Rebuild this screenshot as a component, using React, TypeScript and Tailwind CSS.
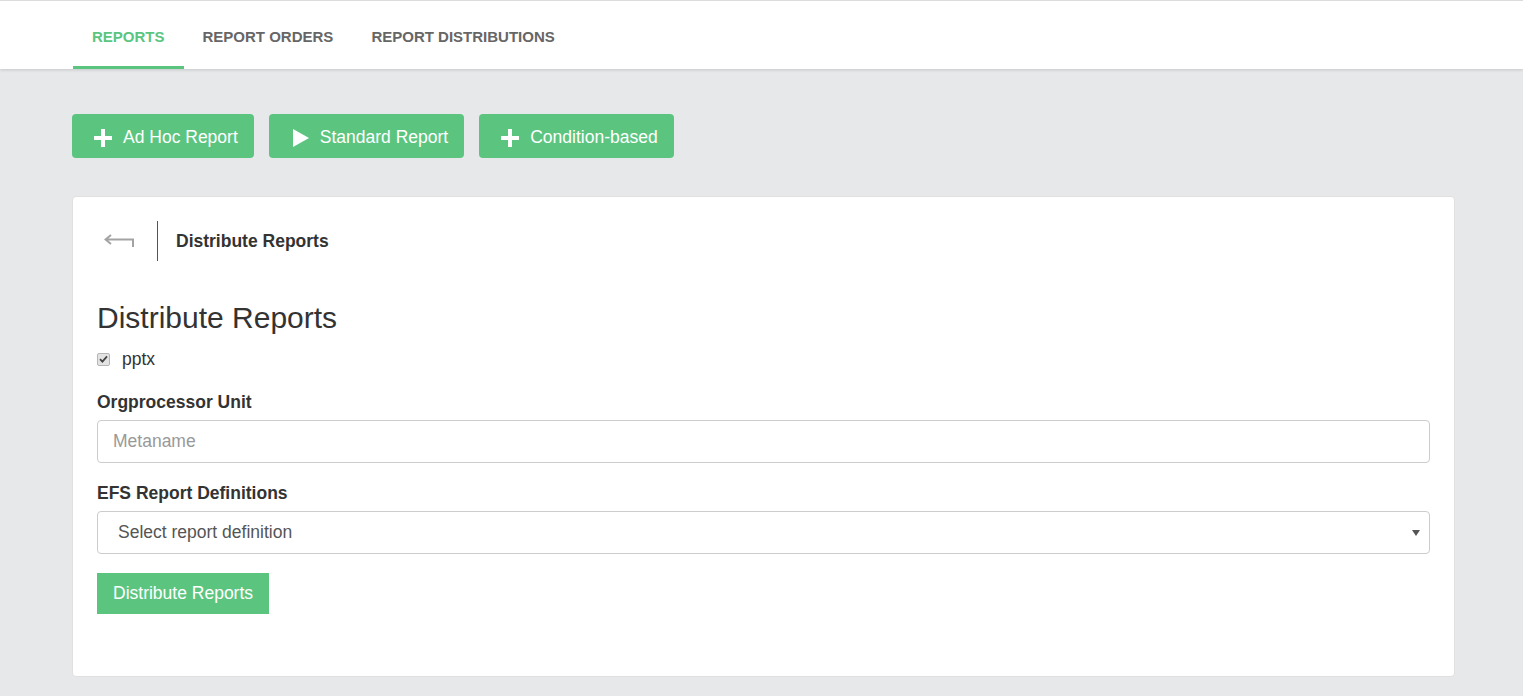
import React from 'react';

const PlusIcon: React.FC = () => (
  <svg width="18" height="18" viewBox="0 0 18 18" className="mr-[11px]">
    <path d="M7 0h4v7h7v4h-7v7H7v-7H0V7h7z" fill="white" />
  </svg>
);

const PlayIcon: React.FC = () => (
  <svg width="17" height="18" viewBox="0 0 17 18" className="mr-[11px]">
    <path d="M1 0L17 9L1 18z" fill="white" />
  </svg>
);

const BackArrow: React.FC = () => (
  <svg width="30" height="14" viewBox="0 0 30 14">
    <path d="M7 1L1.5 5.5L7 10M1.5 5.5H29V13" fill="none" stroke="#a3a3a3" strokeWidth="2" />
  </svg>
);

const tabs = ['REPORTS', 'REPORT ORDERS', 'REPORT DISTRIBUTIONS'];

export default function App() {
  return (
    <div
      className="min-h-screen bg-[#e7e8ea] text-[#333]"
      style={{ fontFamily: '"Liberation Sans", Arial, sans-serif' }}
    >
      {/* Top nav */}
      <div className="bg-white border-t border-[#dcdcdc] shadow-[0_1px_3px_rgba(0,0,0,0.15)]">
        <div className="flex pl-[73px] h-[68px]">
          {tabs.map((t, i) => (
            <div
              key={t}
              className={
                i === 0
                  ? 'flex items-center pt-[8px] px-[19px] text-[15px] font-bold text-[#5bc57f] border-b-[3px] border-[#5bc57f]'
                  : 'flex items-center pt-[8px] px-[19px] text-[15px] font-bold text-[#666] border-b-[3px] border-transparent'
              }
            >
              {t}
            </div>
          ))}
        </div>
      </div>

      <div className="pl-[72px] pr-[68px]">
        {/* Action buttons */}
        <div className="flex gap-[15px] mt-[45px]">
          <button className="flex items-center h-[44px] pl-[22px] pr-[16px] pt-[3px] rounded-[4px] bg-[#5bc57f] text-white text-[17.5px]">
            <PlusIcon />
            Ad Hoc Report
          </button>
          <button className="flex items-center h-[44px] pl-[23px] pr-[16px] pt-[3px] rounded-[4px] bg-[#5bc57f] text-white text-[17.5px]">
            <PlayIcon />
            Standard Report
          </button>
          <button className="flex items-center h-[44px] pl-[22px] pr-[16px] pt-[3px] rounded-[4px] bg-[#5bc57f] text-white text-[17.5px]">
            <PlusIcon />
            Condition-based
          </button>
        </div>

        {/* Card */}
        <div className="mt-[38px] bg-white rounded-[4px] border border-[#e0e0e0] px-6 pt-[24px] pb-[62px]">
          <div className="flex items-center h-[40px]">
            <div className="w-[60px] flex pl-[7px]">
              <BackArrow />
            </div>
            <div className="w-px h-[40px] bg-[#555]" />
            <div className="pl-[18px] text-[17.5px] font-bold text-[#333]">Distribute Reports</div>
          </div>

          <h2 className="mt-[39px] text-[30px] leading-[36px] text-[#333]">Distribute Reports</h2>

          <label className="flex items-center mt-[11px] h-[24px]">
            <span className="w-[13px] h-[13px] rounded-[2px] border border-[#b5b5b5] bg-[#e3e3e3] flex items-center justify-center">
              <svg width="9" height="8" viewBox="0 0 9 8">
                <path d="M1 4.2L3.4 6.6L8 1.4" fill="none" stroke="#444" strokeWidth="1.8" />
              </svg>
            </span>
            <span className="ml-[12px] text-[17.5px] text-[#333]">pptx</span>
          </label>

          <div className="mt-[19px] text-[17.5px] font-bold leading-[24px]">Orgprocessor Unit</div>
          <input
            placeholder="Metaname"
            className="mt-[6px] block w-full h-[43px] px-[15px] rounded-[4px] border border-[#ccc] text-[17.5px] placeholder:text-[#999] outline-none"
          />

          <div className="mt-[18px] text-[17.5px] font-bold leading-[24px]">EFS Report Definitions</div>
          <div className="mt-[6px] relative w-full h-[43px] rounded-[4px] border border-[#ccc] flex items-center pl-[20px] text-[17.5px] text-[#555]">
            Select report definition
            <svg width="8" height="6" viewBox="0 0 8 6" className="absolute right-[9px] top-[18px]">
              <path d="M0 0H8L4 6z" fill="#555" />
            </svg>
          </div>

          <button className="mt-[19px] h-[41px] px-[16px] bg-[#5bc57f] text-white text-[17.5px]">
            Distribute Reports
          </button>
        </div>
      </div>
    </div>
  );
}
